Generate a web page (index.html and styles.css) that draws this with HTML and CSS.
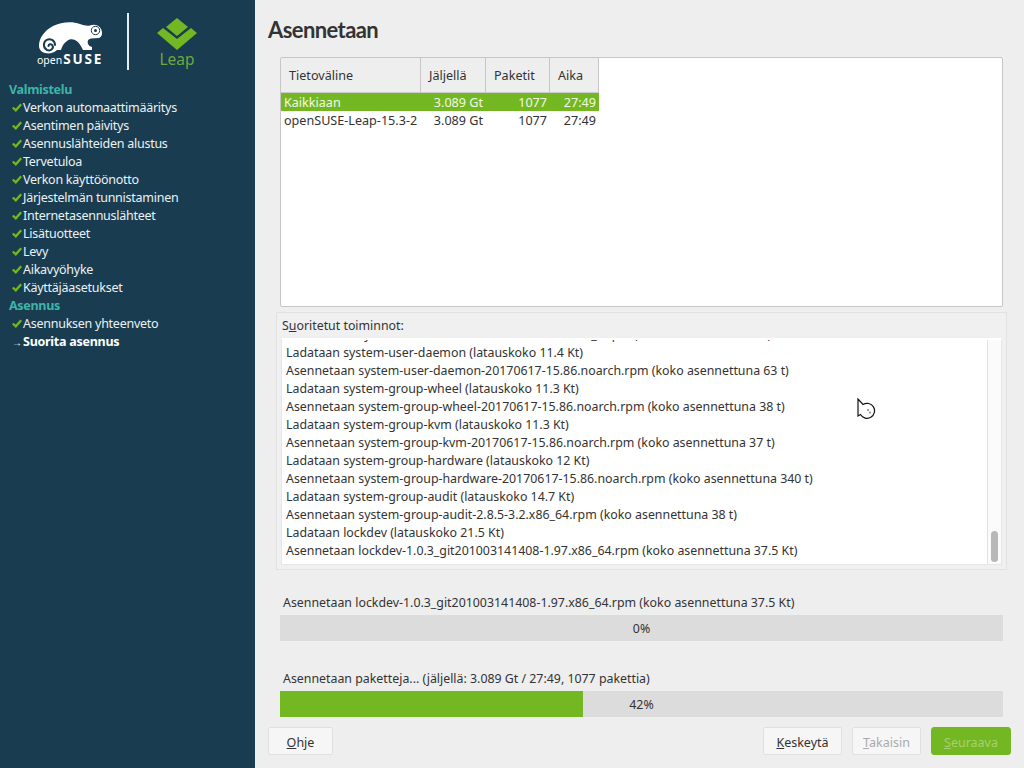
FILE: index.html
```html
<!DOCTYPE html>
<html lang="fi">
<head>
<meta charset="utf-8">
<title>Asennetaan</title>
<link rel="stylesheet" href="styles.css">
</head>
<body>
<svg class="defs" width="0" height="0">
  <symbol id="chk" viewBox="0 0 10 9"><path fill="none" stroke="#73b723" stroke-width="2.300" d="M.8 4.500 3.800 7.300 9.200 1.200"/></symbol>
</svg>
<aside class="sidebar">
  <div class="logos">
    <div class="logo-suse">
      <svg class="chameleon" width="66" height="33" viewBox="39 21 66 33">
        <path fill="#fff" d="M40 46C40 38 45 31 54 26 62 22 73 21 81 24 85 25.500 88 26 91 25.500 95 24 100 25 102 29 104 33 103 37 100 38L92 38.500C89 39 88 41 89 44L90.500 46 93 47 93 50 84 50C82 46 80 42 76 40 73 38.500 70 39 68 41 65 43 63 46 62 50L58 50C55 53 50 54 46 53 42 52 40 49 40 46Z"/>
        <circle cx="96.500" cy="30.500" r="4.200" fill="none" stroke="#1a3c50" stroke-width="1"/>
        <circle cx="96.500" cy="30.500" r="1.500" fill="#1a3c50"/>
        <path fill="none" stroke="#1a3c50" stroke-width="2" stroke-linecap="round" d="M56 45C56 40 51 38 47.500 40 44 42 44 48 48 50 52 51.500 55 48 53.500 45.500 52.500 43.500 49.500 44 49.500 46"/>
      </svg>
      <div class="wordmark"><span class="open">open</span><span class="suse">SUSE</span></div>
    </div>
    <div class="logo-divider"></div>
    <div class="logo-leap">
      <svg width="40" height="32" viewBox="0 0 40 32">
        <path fill="#73b723" d="M20 0 31 9 20 18 9 9Z"/>
        <path fill="#73b723" d="M0 15 6 10 20 21 34 10 40 15 20 32Z"/>
      </svg>
      <span class="leap-text">Leap</span>
    </div>
  </div>
  <nav class="steps">
    <div class="step-head">Valmistelu</div>
    <div class="step"><svg class="check"><use href="#chk"/></svg>Verkon automaattimääritys</div>
    <div class="step"><svg class="check"><use href="#chk"/></svg>Asentimen päivitys</div>
    <div class="step"><svg class="check"><use href="#chk"/></svg>Asennuslähteiden alustus</div>
    <div class="step"><svg class="check"><use href="#chk"/></svg>Tervetuloa</div>
    <div class="step"><svg class="check"><use href="#chk"/></svg>Verkon käyttöönotto</div>
    <div class="step"><svg class="check"><use href="#chk"/></svg>Järjestelmän tunnistaminen</div>
    <div class="step"><svg class="check"><use href="#chk"/></svg>Internetasennuslähteet</div>
    <div class="step"><svg class="check"><use href="#chk"/></svg>Lisätuotteet</div>
    <div class="step"><svg class="check"><use href="#chk"/></svg>Levy</div>
    <div class="step"><svg class="check"><use href="#chk"/></svg>Aikavyöhyke</div>
    <div class="step"><svg class="check"><use href="#chk"/></svg>Käyttäjäasetukset</div>
    <div class="step-head">Asennus</div>
    <div class="step"><svg class="check"><use href="#chk"/></svg>Asennuksen yhteenveto</div>
    <div class="step current"><span class="arrow">→</span>Suorita asennus</div>
  </nav>
</aside>
<main class="main">
  <h1 class="title">Asennetaan</h1>
  <section class="media">
    <div class="media-grid">
      <div class="th">Tietoväline</div><div class="th">Jäljellä</div><div class="th">Paketit</div><div class="th last">Aika</div>
      <div class="td sel">Kaikkiaan</div><div class="td sel num">3.089 Gt</div><div class="td sel num">1077</div><div class="td sel num">27:49</div>
      <div class="td">openSUSE-Leap-15.3-2</div><div class="td num">3.089 Gt</div><div class="td num">1077</div><div class="td num">27:49</div>
    </div>
  </section>
  <section class="log-group">
    <div class="log-label">S<u>u</u>oritetut toiminnot:</div>
    <div class="log-box">
      <div class="log-lines">
        <div>Asennetaan system-user-bin-20170617-15.86.noarch_x.rpm (koko asennettuna 63 t)</div>
        <div>Ladataan system-user-daemon (latauskoko 11.4 Kt)</div>
        <div>Asennetaan system-user-daemon-20170617-15.86.noarch.rpm (koko asennettuna 63 t)</div>
        <div>Ladataan system-group-wheel (latauskoko 11.3 Kt)</div>
        <div>Asennetaan system-group-wheel-20170617-15.86.noarch.rpm (koko asennettuna 38 t)</div>
        <div>Ladataan system-group-kvm (latauskoko 11.3 Kt)</div>
        <div>Asennetaan system-group-kvm-20170617-15.86.noarch.rpm (koko asennettuna 37 t)</div>
        <div>Ladataan system-group-hardware (latauskoko 12 Kt)</div>
        <div>Asennetaan system-group-hardware-20170617-15.86.noarch.rpm (koko asennettuna 340 t)</div>
        <div>Ladataan system-group-audit (latauskoko 14.7 Kt)</div>
        <div>Asennetaan system-group-audit-2.8.5-3.2.x86_64.rpm (koko asennettuna 38 t)</div>
        <div>Ladataan lockdev (latauskoko 21.5 Kt)</div>
        <div>Asennetaan lockdev-1.0.3_git201003141408-1.97.x86_64.rpm (koko asennettuna 37.5 Kt)</div>
      </div>
      <div class="scrollbar"><div class="thumb"></div></div>
    </div>
  </section>
  <section class="progress first">
    <div class="progress-label">Asennetaan lockdev-1.0.3_git201003141408-1.97.x86_64.rpm (koko asennettuna 37.5 Kt)</div>
    <div class="bar"><div class="fill" style="width:0%"></div><span class="pct">0%</span></div>
  </section>
  <section class="progress second">
    <div class="progress-label">Asennetaan paketteja... (jäljellä: 3.089 Gt / 27:49, 1077 pakettia)</div>
    <div class="bar"><div class="fill" style="width:41.9%"></div><span class="pct">42%</span></div>
  </section>
  <footer class="buttons">
    <button class="btn help"><u>O</u>hje</button>
    <span class="spacer"></span>
    <button class="btn abort"><u>K</u>eskeytä</button>
    <button class="btn back" disabled><u>T</u>akaisin</button>
    <button class="btn next" disabled><u>S</u>euraava</button>
  </footer>
  <svg class="cursor" width="20" height="22" viewBox="0 0 20 22">
    <path fill="#fff" stroke="#111" stroke-width="1.200" d="M1 1V18L3.500 16.500A7.500 7.500 0 1 0 6 6.500Z"/>
    <circle cx="11" cy="12" r=".9" fill="#777"/><circle cx="13" cy="14.500" r=".9" fill="#777"/>
  </svg>
</main>
</body>
</html>
```
FILE: styles.css
```css
* { box-sizing: border-box; }
html, body { margin: 0; height: 100%; }
body {
  display: flex;
  width: 1024px;
  height: 768px;
  overflow: hidden;
  font-family: "Noto Sans", "Open Sans", sans-serif;
  font-size: 12.36px;
  color: #333;
  background: #eee;
}
.defs { position: absolute; }
.sidebar {
  flex: 0 0 255px;
  background: #1a3c50;
  color: #eaf2f4;
}
.logos {
  display: flex;
  align-items: flex-start;
  height: 80px;
  padding: 13px 0 0 38px;
}
.logo-suse { display: flex; flex-direction: column; width: 66px; padding-top: 8px; }
.chameleon { display: block; }
.wordmark { display: flex; align-items: baseline; line-height: 14px; margin: -2px 0 0 -1px; color: #fff; }
.open { font-size: 10.5px; }
.suse { font-size: 13.5px; font-weight: 700; letter-spacing: 1.8px; margin-left: 1px; }
.logo-divider { width: 2px; height: 57px; margin-left: 23px; background: #e8eef0; }
.logo-leap { display: flex; flex-direction: column; align-items: center; margin-left: 28px; padding-top: 5px; width: 40px; }
.leap-text { color: #6da741; font-size: 15.5px; line-height: 18px; }
.steps { display: flex; flex-direction: column; }
.step-head { height: 18px; line-height: 20px; padding-left: 9px; font-weight: 700; color: #3fb5a8; font-size: 12.5px; letter-spacing: -.3px; }
.step { display: flex; align-items: flex-start; height: 18px; line-height: 20px; padding-left: 12px; font-size: 12.5px; letter-spacing: -.26px; white-space: nowrap; }
.check { width: 10px; height: 9px; margin: 5px 1px 0 0; flex: none; }
.arrow { width: 11px; color: #fff; font-size: 10px; flex: none; }
.current { font-weight: 700; color: #fff; }
.main { position: relative; flex: 1; display: flex; flex-direction: column; min-width: 0; }
.title { margin: 0; height: 57px; padding: 14px 0 0 13px; font-family: Lato, "Noto Sans", sans-serif; font-size: 22px; line-height: 32px; font-weight: 700; letter-spacing: -.6px; color: #333; }
.media {
  height: 250px;
  margin: 0 21px 0 25px;
  background: #fff;
  border: 1px solid #c6c6c6;
  border-radius: 2px;
  font-size: 12.6px;
}
.media-grid { display: grid; grid-template-columns: 140px 65px 64px 49px; width: 318px; }
.th { height: 35px; line-height: 36px; padding-left: 8px; background: #eee; border-right: 1px solid #c6c6c6; border-bottom: 1px solid #ccc; }
.td { height: 18px; line-height: 20px; padding: 0 3px; white-space: nowrap; text-align: left; }
.num { text-align: right; }
.sel { background: #73b723; color: #f2f8e6; }
.log-group {
  height: 258px;
  margin: 5px 17px 0 21px;
  padding: 0 4px 4px;
  background: #f0f0f0;
  border: 1px solid #e2e2e2;
  display: flex;
  flex-direction: column;
}
.log-label { height: 21px; line-height: 18px; padding: 4px 0 0 1px; flex: none; box-sizing: content-box; }
.log-box { flex: 1; min-height: 0; display: flex; background: #fff; border: 1px solid #e6e6e6; border-top: 2px solid #fff; }
.log-lines { flex: 1; min-width: 0; display: flex; flex-direction: column; justify-content: flex-end; overflow: hidden; padding: 0 0 4px 4px; }
.log-lines div { flex: none; height: 18px; line-height: 18px; white-space: nowrap; }
.scrollbar { flex: 0 0 14px; display: flex; flex-direction: column; justify-content: flex-end; padding: 0 3px 2px; background: #fbfbfb; border-left: 1px solid #e2e2e2; }
.thumb { height: 31px; background: #b8b8b8; border-radius: 4px; }
.progress { margin: 0 21px 0 25px; display: flex; flex-direction: column; }
.first { margin-top: 24px; }
.second { margin-top: 29px; }
.progress-label { height: 21px; line-height: 18px; padding-left: 3px; white-space: nowrap; }
.bar { position: relative; height: 26px; background: #dcdcdc; }
.fill { height: 100%; background: #73b723; }
.pct { position: absolute; inset: 0; text-align: center; line-height: 27.500px; }
.buttons { display: flex; align-items: flex-start; margin-top: 10px; padding: 0 13px; gap: 10px; }
.spacer { flex: 1; }
.btn { height: 28px; padding: 2px 0 0; font: inherit; font-size: 12.5px; color: #333; background: #f6f6f6; border: 1px solid #e0e0e0; border-radius: 2px; }
.help { width: 65px; }
.abort { width: 79px; }
.back { width: 69px; color: #aaa; }
.next { width: 80px; background: #73b723; border-color: #73b723; color: #a8d070; border-radius: 3px; }
.cursor { position: absolute; left: 602px; top: 398px; }
```
